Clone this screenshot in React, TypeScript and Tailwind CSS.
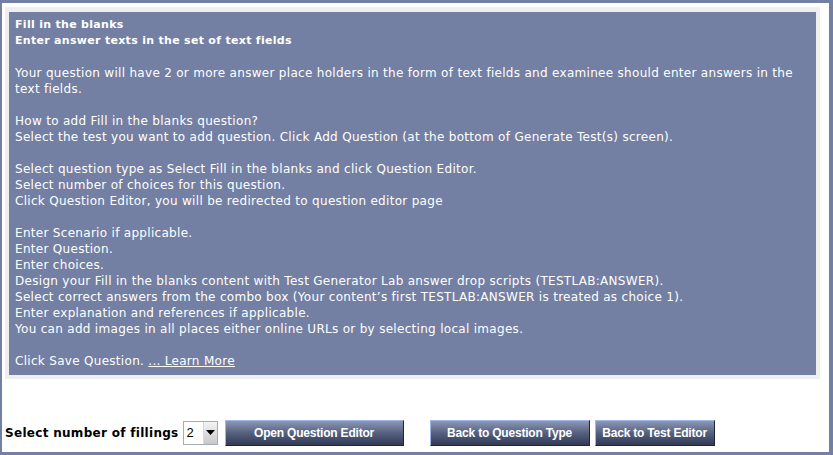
const lines: (string | null)[] = [
  "Your question will have 2 or more answer place holders in the form of text fields and examinee should enter answers in the text fields.",
  null,
  "How to add Fill in the blanks question?",
  "Select the test you want to add question. Click Add Question (at the bottom of Generate Test(s) screen).",
  null,
  "Select question type as Select Fill in the blanks and click Question Editor.",
  "Select number of choices for this question.",
  "Click Question Editor, you will be redirected to question editor page",
  null,
  "Enter Scenario if applicable.",
  "Enter Question.",
  "Enter choices.",
  "Design your Fill in the blanks content with Test Generator Lab answer drop scripts (TESTLAB:ANSWER).",
  "Select correct answers from the combo box (Your content’s first TESTLAB:ANSWER is treated as choice 1).",
  "Enter explanation and references if applicable.",
  "You can add images in all places either online URLs or by selecting local images.",
  null,
];

function NavButton({ label, width }: { label: string; width: string }) {
  return (
    <button
      className={`${width} h-[26px] border border-t-[#9fb6ea] border-l-[#9fb6ea] border-r-[#1e2538] border-b-[#1e2538] bg-gradient-to-b from-[#8d98b6] via-[#56617f] to-[#323a55] text-white font-bold text-[12px] tracking-[-0.2px] font-['Liberation_Sans',Arial,sans-serif]`}
    >
      {label}
    </button>
  );
}

export default function App() {
  return (
    <div className="w-[833px] h-[455px] bg-[#7380a3] pl-[2px] pt-[3px] pr-[4px] pb-[3px]">
      <div className="h-full bg-white flex flex-col pl-[3px] pt-[4px] pr-[9px]">
        <div className="bg-[#efefef] p-[4px] pt-[5px]">
          <div className="bg-[#7380a3] text-white text-[12px] tracking-[0.3px] leading-[16px] font-['DejaVu_Sans',Verdana,sans-serif] pl-[6px] pr-[6px] pt-[5px] pb-[6px]">
            <div className="font-bold text-[11px]">Fill in the blanks</div>
            <div className="font-bold text-[11px]">Enter answer texts in the set of text fields</div>
            <div className="h-[16px]" />
            {lines.map((l, i) =>
              l === null ? <div key={i} className="h-[16px]" /> : <div key={i}>{l}</div>
            )}
            <div>
              Click Save Question. <a className="underline cursor-pointer">... Learn More</a>
            </div>
          </div>
        </div>
        <div className="flex items-center mt-[40px] -ml-[3px] pl-[3px]">
          <span className="font-bold text-[12px] tracking-[0.3px] font-['DejaVu_Sans',Verdana,sans-serif] text-black">
            Select number of fillings
          </span>
          <div className="ml-[4px] w-[35px] h-[24px] border border-[#a5acb5] flex items-stretch bg-white">
            <span className="flex-1 pl-[3px] text-[13px] leading-[22px] font-['Liberation_Sans',Arial,sans-serif]">2</span>
            <span className="w-[14px] bg-gradient-to-b from-[#f4f4f4] to-[#c8c8c8] border-l border-[#d8d8d8] flex items-center justify-center">
              <svg width="9" height="5" viewBox="0 0 9 5"><path d="M0 0h9L4.5 5z" fill="#000" /></svg>
            </span>
          </div>
          <div className="ml-[7px]">
            <NavButton label="Open Question Editor" width="w-[179px]" />
          </div>
          <div className="ml-[26px] flex gap-[5px]">
            <NavButton label="Back to Question Type" width="w-[160px]" />
            <NavButton label="Back to Test Editor" width="w-[120px]" />
          </div>
        </div>
      </div>
    </div>
  );
}
